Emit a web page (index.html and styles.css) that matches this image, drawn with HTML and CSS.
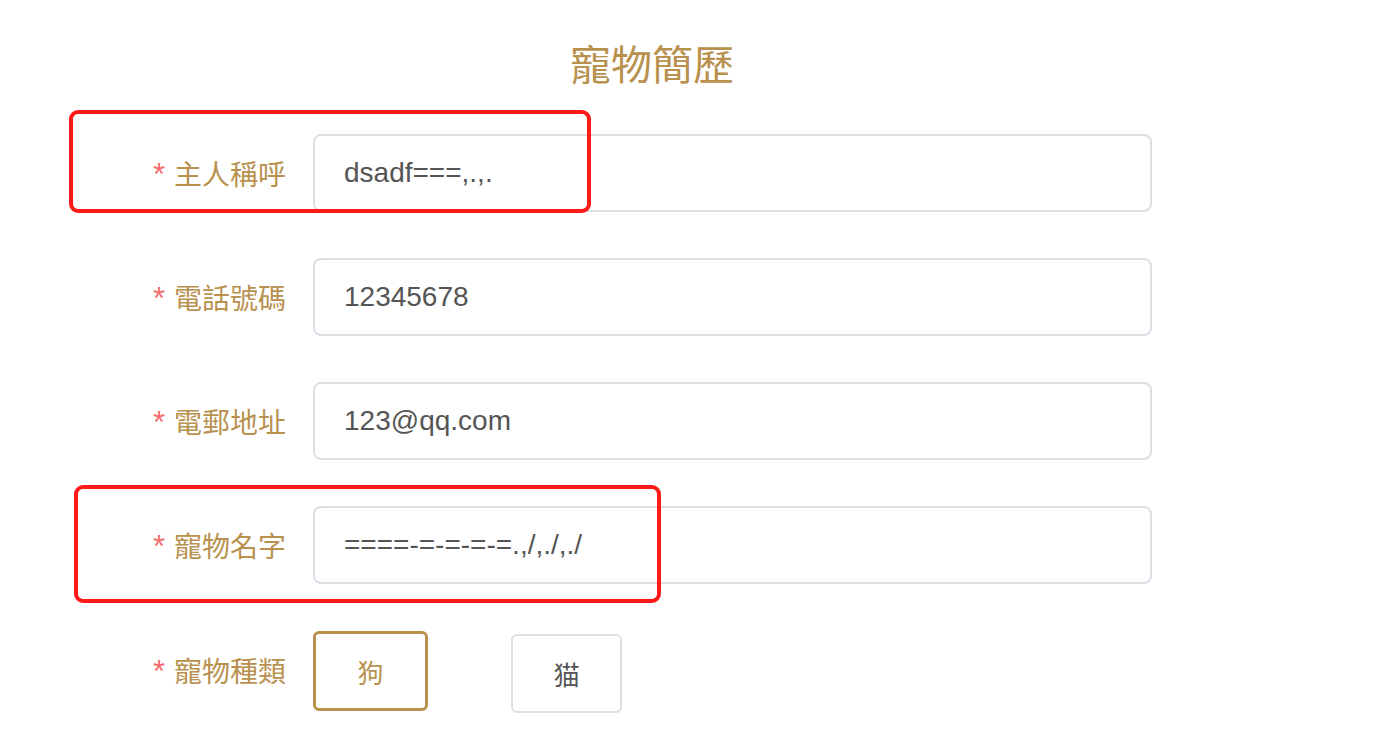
FILE: index.html
```html
<!DOCTYPE html>
<html lang="zh-Hant">
<head>
  <meta charset="UTF-8">
  <meta name="viewport" content="width=device-width, initial-scale=1.0">
  <title>寵物簡歷</title>
  <link rel="stylesheet" href="styles.css">
</head>
<body>
  <div class="page">
    <h1 class="title">寵物簡歷</h1>
    <form class="resume-form">
      <div class="form-row">
        <label class="form-label"><span class="req">*</span>主人稱呼</label>
        <input class="form-input" type="text" value="dsadf===,.,.">
      </div>
      <div class="form-row">
        <label class="form-label"><span class="req">*</span>電話號碼</label>
        <input class="form-input" type="text" value="12345678">
      </div>
      <div class="form-row">
        <label class="form-label"><span class="req">*</span>電郵地址</label>
        <input class="form-input" type="text" value="123@qq.com">
      </div>
      <div class="form-row">
        <label class="form-label"><span class="req">*</span>寵物名字</label>
        <input class="form-input" type="text" value="====-=-=-=-=.,/,./,./">
      </div>
      <div class="form-row type-row">
        <label class="form-label"><span class="req">*</span>寵物種類</label>
        <div class="type-group">
          <button type="button" class="type-btn active">狗</button>
          <button type="button" class="type-btn">猫</button>
        </div>
      </div>
    </form>
  </div>
  <!-- annotation marks -->
  <div class="mark mark-owner"></div>
  <div class="mark mark-pet"></div>
</body>
</html>
```

FILE: styles.css
```css
body {
  margin: 0;
  background: #fff;
  font-family: "Liberation Sans", "Noto Sans CJK TC", sans-serif;
}
.page {
  width: 1304px;
  padding-top: 34px;
}
.title {
  margin: 0 0 43px;
  text-align: center;
  font-family: "Noto Sans CJK TC", sans-serif;
  font-weight: 400;
  font-size: 41px;
  line-height: 57px;
  color: #b8914f;
}
.resume-form {
  display: flex;
  flex-direction: column;
  gap: 46px;
}
.form-row {
  display: flex;
  align-items: center;
}
.form-label {
  width: 286px;
  padding-right: 27px;
  text-align: right;
  font-family: "Noto Sans CJK TC", sans-serif;
  font-size: 28px;
  color: #b8914f;
  white-space: nowrap;
}
.req {
  font-family: "Liberation Sans", sans-serif;
  font-size: 31px;
  color: #f56c6c;
  margin-right: 9px;
}
.form-input {
  box-sizing: border-box;
  width: 839px;
  height: 78px;
  padding: 0 29px;
  border: 2px solid #dcdfe6;
  border-radius: 8px;
  font-family: "Liberation Sans", sans-serif;
  font-size: 28px;
  color: #555;
  outline: none;
}
.type-row {
  align-items: flex-start;
}
.type-row .form-label {
  line-height: 80px;
}
.type-group {
  display: flex;
  align-items: flex-start;
  gap: 83px;
}
.type-btn {
  box-sizing: border-box;
  width: 111px;
  height: 79px;
  margin-top: 4px;
  background: #fff;
  border: 2px solid #dcdfe6;
  border-radius: 6px;
  font-family: "Noto Sans CJK TC", sans-serif;
  font-size: 26px;
  color: #555;
  cursor: pointer;
}
.type-btn.active {
  width: 115px;
  height: 80px;
  margin-top: 1px;
  border: 3px solid #b8914f;
  color: #b8914f;
}
.mark {
  position: absolute;
  box-sizing: border-box;
  border: 4px solid #ff1a1a;
  border-radius: 9px;
}
.mark-owner {
  left: 69px;
  top: 110px;
  width: 522px;
  height: 103px;
}
.mark-pet {
  left: 74px;
  top: 485px;
  width: 587px;
  height: 118px;
}
```
